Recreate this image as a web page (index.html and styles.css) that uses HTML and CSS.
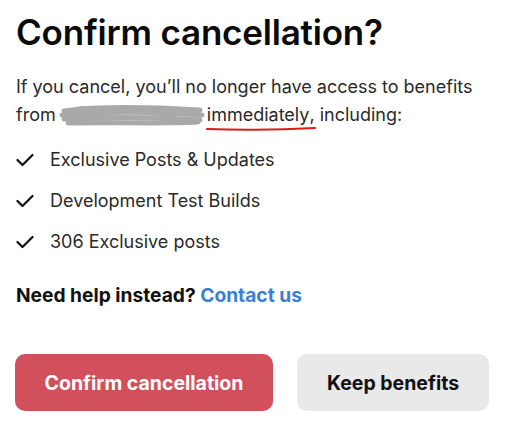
FILE: index.html
```html
<!DOCTYPE html>
<html>
<head>
<meta charset="utf-8">
<link rel="stylesheet" href="styles.css">
</head>
<body>
<main class="dialog">
  <h1 class="title">Confirm cancellation?</h1>
  <p class="intro">If you cancel, you’ll no longer have access to benefits from <span class="redacted"><svg class="scribble" width="148" height="24" viewBox="0 0 148 24"><path d="M6 8 C40 3 90 4 142 7 M4 12 C50 8 100 9 144 12 M6 16 C50 14 100 14 142 17 M10 20 C60 19 100 21 140 19 M20 6 C60 6 110 6 132 9" fill="none" stroke="#a9a9a9" stroke-width="5" stroke-linecap="round"/></svg></span><span class="marked">immediately<svg class="underline" width="112" height="6" viewBox="0 0 112 6"><path d="M2 3 C30 4 70 4 110 2" fill="none" stroke="#e01818" stroke-width="2" stroke-linecap="round"/></svg></span>, including:</p>
  <ul class="benefits">
    <li class="benefit"><svg class="check" width="18" height="14" viewBox="0 0 18 14"><path d="M1.5 7 L6.5 12 L16.5 2" fill="none" stroke="#111" stroke-width="2.2" stroke-linecap="round" stroke-linejoin="round"/></svg>Exclusive Posts &amp; Updates</li>
    <li class="benefit"><svg class="check" width="18" height="14" viewBox="0 0 18 14"><path d="M1.5 7 L6.5 12 L16.5 2" fill="none" stroke="#111" stroke-width="2.2" stroke-linecap="round" stroke-linejoin="round"/></svg>Development Test Builds</li>
    <li class="benefit"><svg class="check" width="18" height="14" viewBox="0 0 18 14"><path d="M1.5 7 L6.5 12 L16.5 2" fill="none" stroke="#111" stroke-width="2.2" stroke-linecap="round" stroke-linejoin="round"/></svg>306 Exclusive posts</li>
  </ul>
  <p class="help">Need help instead? <a class="contact" href="#">Contact us</a></p>
  <div class="actions">
    <button class="btn btn-confirm">Confirm cancellation</button>
    <button class="btn btn-keep">Keep benefits</button>
  </div>
</main>
</body>
</html>
```

FILE: styles.css
```css
* { box-sizing: border-box; }
html, body { margin: 0; padding: 0; background: #fff; }
body {
  font-family: Inter, "Noto Sans", sans-serif;
  color: #1a1a1a;
}
.dialog {
  padding: 10px 16px 0 16px;
}
.title {
  margin: 0;
  font-size: 35px;
  font-weight: 600;
  line-height: 44px;
  color: #0b0b0b;
  letter-spacing: -0.2px;
}
.intro {
  margin: 19px 0 0 0;
  font-size: 18px;
  line-height: 28px;
  color: #2a2a2a;
}
.redacted {
  display: inline-block;
  width: 146px;
  height: 20px;
  vertical-align: -5px;
  position: relative;
}
.scribble {
  position: absolute;
  left: -3px;
  top: -3px;
}
.marked {
  position: relative;
}
.underline {
  position: absolute;
  left: -2px;
  bottom: -7px;
}
.benefits {
  list-style: none;
  margin: 10px 0 0 0;
  padding: 0;
}
.benefit {
  display: flex;
  align-items: center;
  gap: 16px;
  height: 41px;
  font-size: 18px;
  color: #2a2a2a;
}
.check { flex: none; }
.help {
  margin: 20px 0 0 0;
  font-size: 19.2px;
  font-weight: 700;
  color: #111;
  line-height: 26px;
}
.contact {
  color: #3a7fd5;
  text-decoration: none;
}
.actions {
  display: flex;
  gap: 24px;
  margin-top: 46px;
}
.btn {
  height: 57px;
  border: none;
  border-radius: 10px;
  font-family: Inter, "Noto Sans", sans-serif;
  font-size: 19.5px;
  font-weight: 700;
}
.btn-confirm {
  width: 258px;
  background: #d24f5c;
  color: #fff;
  margin-left: -1px;
}
.btn-keep {
  width: 192px;
  background: #e9e9e9;
  color: #111;
}
```
